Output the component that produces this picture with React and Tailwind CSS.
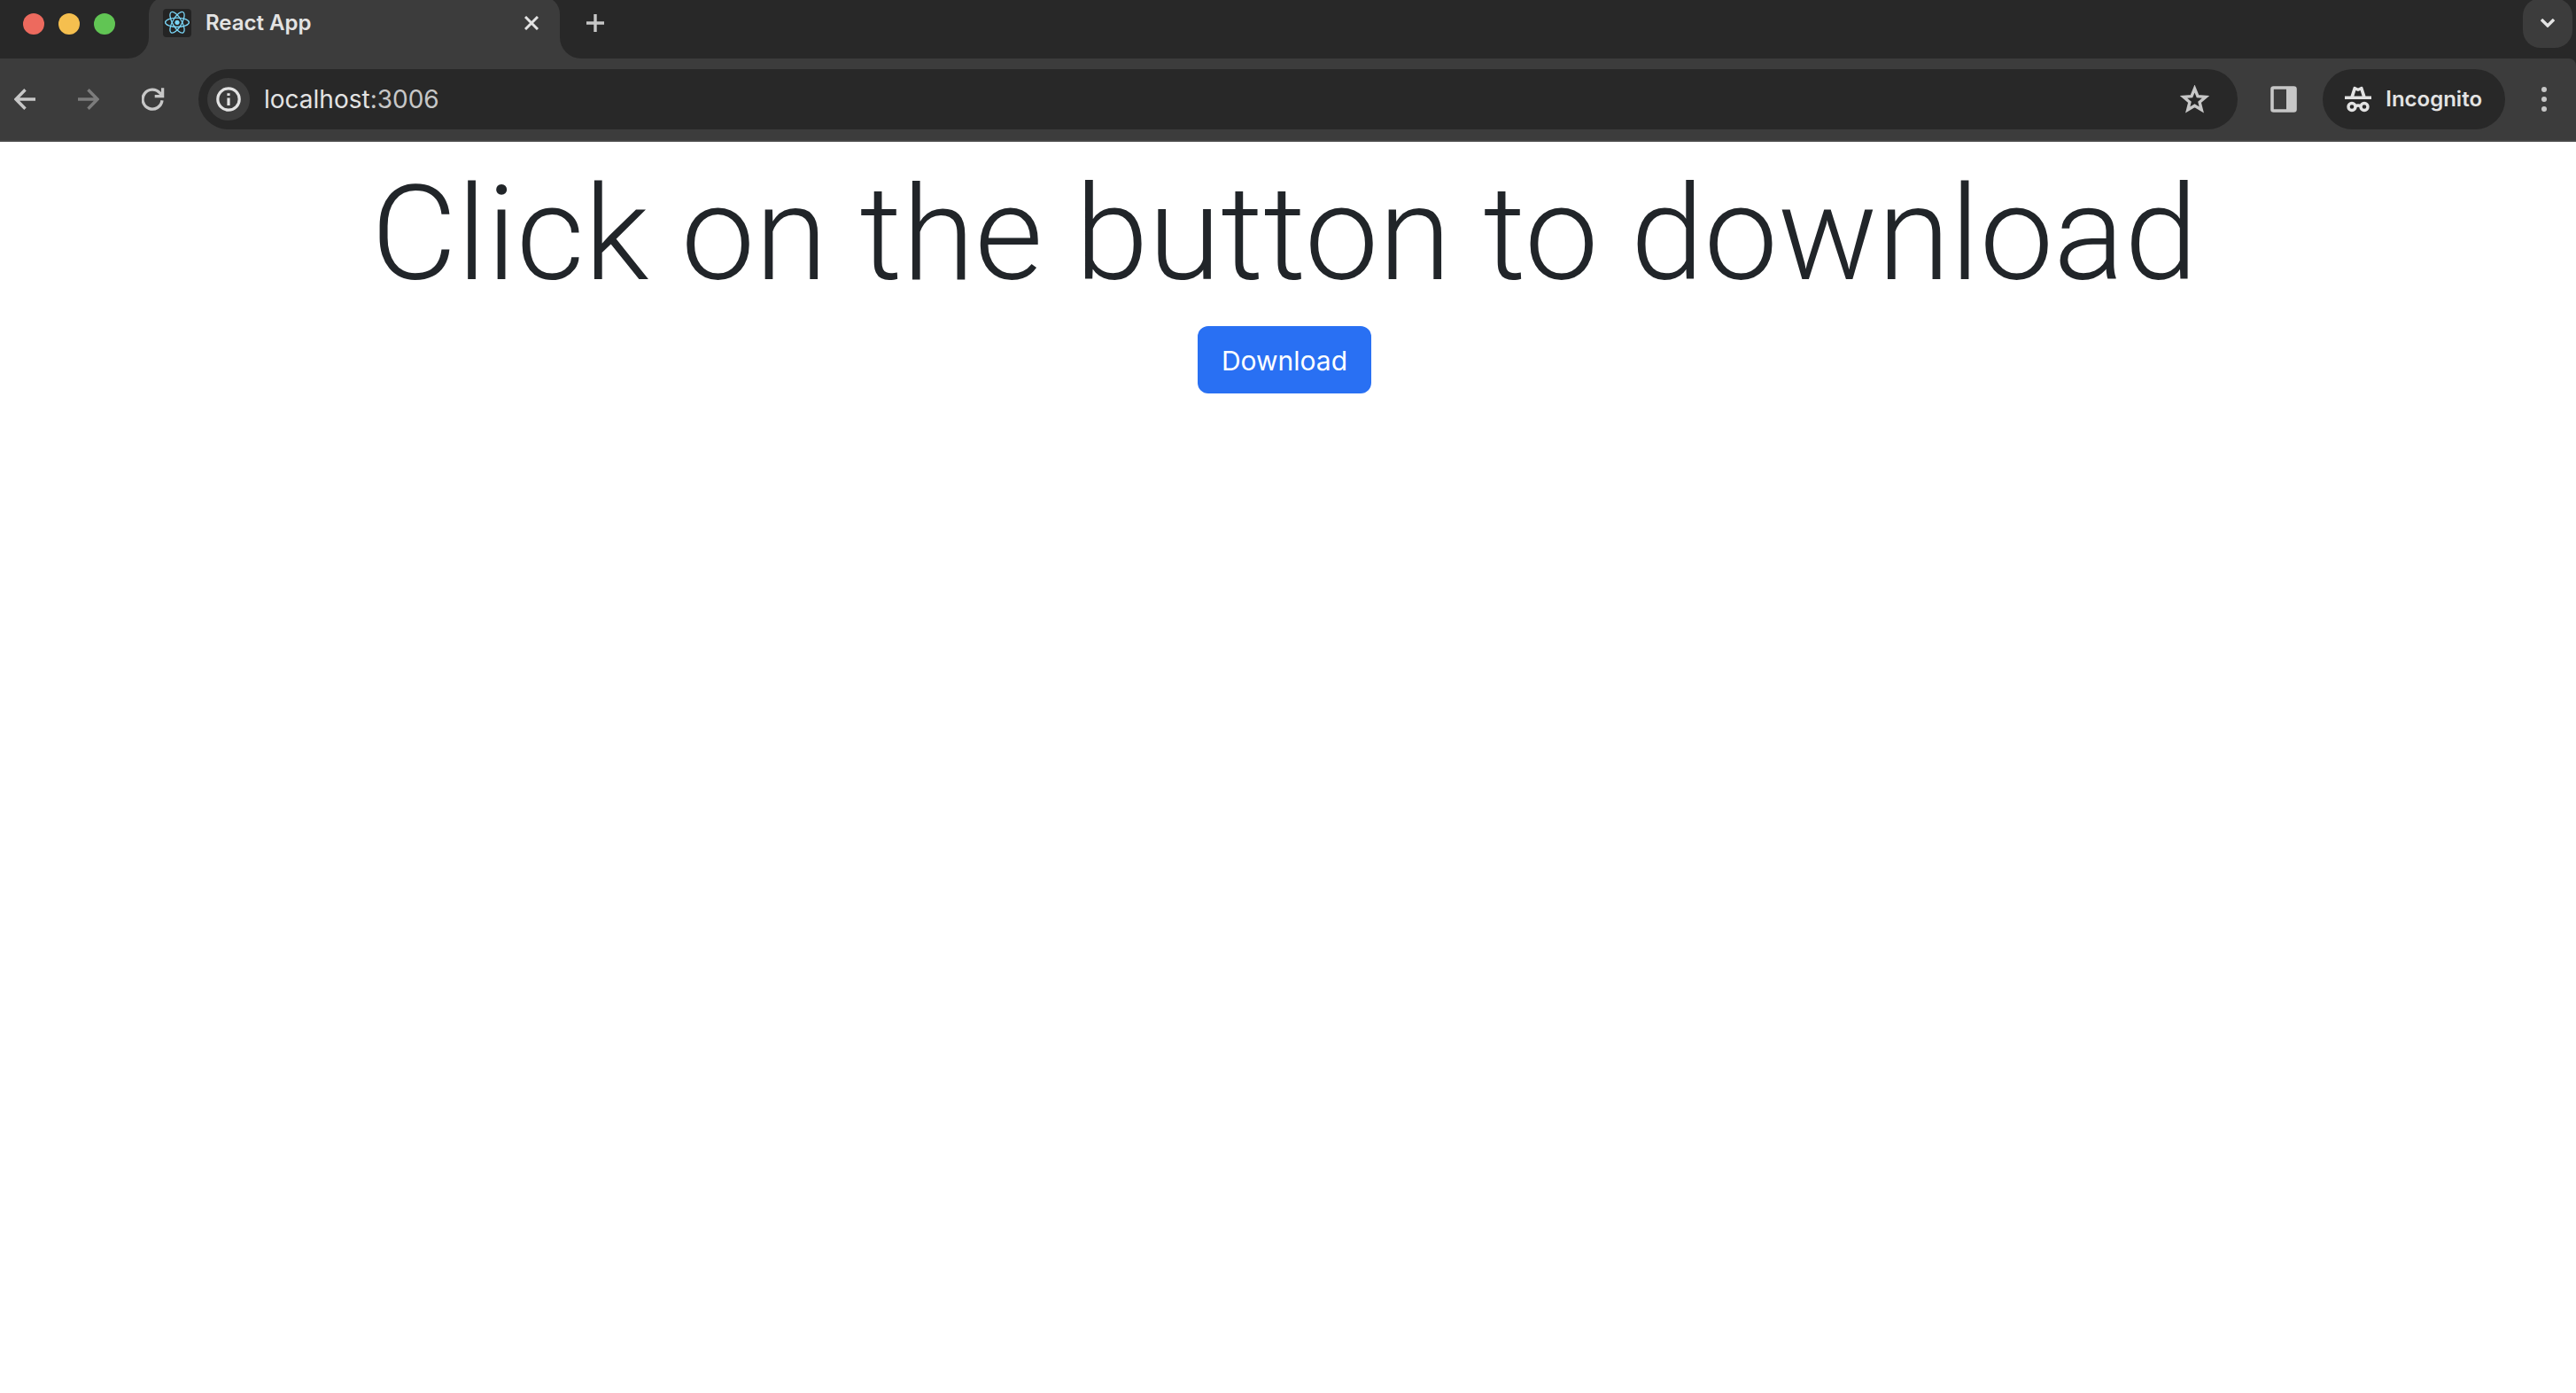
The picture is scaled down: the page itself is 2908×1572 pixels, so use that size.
const ICON = "block shrink-0";

function ReactLogo() {
  return (
    <svg viewBox="0 0 32 32" className="block size-8 shrink-0" fill="none" aria-hidden="true">
      <rect width="32" height="32" rx="4" fill="#242424" />
      <circle cx="16" cy="15.3" r="2.6" fill="#7ad6f7" />
      <g stroke="#7ad6f7" strokeWidth="1.3">
        <ellipse cx="16" cy="15.3" rx="13.4" ry="5.2" />
        <ellipse cx="16" cy="15.3" rx="13.4" ry="5.2" transform="rotate(60 16 15.3)" />
        <ellipse cx="16" cy="15.3" rx="13.4" ry="5.2" transform="rotate(120 16 15.3)" />
      </g>
    </svg>
  );
}

function ArrowIcon({ flipped }) {
  return (
    <svg viewBox="0 0 24 24" className={`${ICON} size-6`} fill="none" stroke="currentColor" strokeWidth="3.4" aria-hidden="true">
      <path d={flipped ? "M0 12H22M11.5 1.2L22 12L11.5 22.8" : "M24 12H2M12.5 1.2L2 12L12.5 22.8"} />
    </svg>
  );
}

function ReloadIcon() {
  return (
    <svg viewBox="1 0 26 26" className={`${ICON} size-[26px]`} fill="none" stroke="currentColor" strokeWidth="3.3" aria-hidden="true">
      <path d="M24 14.3A11 11 0 1 1 21.5 6L24.3 9M15.7 9.7H24.6V.3" />
    </svg>
  );
}

function InfoIcon() {
  return (
    <svg viewBox="0 0 28 28" className={`${ICON} size-7`} fill="none" stroke="currentColor" aria-hidden="true">
      <circle cx="14" cy="14" r="12.2" strokeWidth="3.2" />
      <path d="M14 12.5V21M14 7.2V10" strokeWidth="3.2" />
    </svg>
  );
}

function StarIcon() {
  return (
    <svg viewBox="0 0 33 33" className={`${ICON} size-[33px]`} fill="none" stroke="currentColor" strokeWidth="3.4" aria-hidden="true">
      <path d="M16.5 4L20 12.7L29 13.4L22.1 19.3L24.3 28L16.5 23.3L8.7 28L10.9 19.3L4 13.4L13 12.7Z" />
    </svg>
  );
}

function SidePanelIcon() {
  return (
    <svg viewBox="0 0 30 30" className={`${ICON} size-[30px]`} fill="none" aria-hidden="true">
      <rect x="2" y="2" width="26" height="26" rx="1.5" stroke="currentColor" strokeWidth="3.6" />
      <path d="M18 2H28V28H18Z" fill="currentColor" />
    </svg>
  );
}

function IncognitoIcon() {
  return (
    <svg viewBox="0 0 30 30" className={`${ICON} size-[30px]`} fill="none" aria-hidden="true">
      <path d="M0 11.5H6.5L9.6 1.8Q10 .4 11.3 .8L15 2.4L18.7 .8Q20 .4 20.4 1.8L23.5 11.5H30V15H0Z" fill="currentColor" />
      <path d="M10.4 11.5L12.4 4.9L15 6.1L17.6 4.9L19.6 11.5Z" fill="#282828" />
      <g stroke="currentColor" strokeWidth="3.4">
        <circle cx="8" cy="23.5" r="4" />
        <circle cx="22" cy="23.5" r="4" />
        <path d="M12 23Q15 21 18 23" />
      </g>
    </svg>
  );
}

function TabStrip() {
  return (
    <div className="flex h-[66px] items-end overflow-hidden bg-[#282828]">
      <div className="flex h-[66px] w-42 shrink-0 bg-[#3c3c3c]">
        <div className="flex flex-1 items-start gap-4 rounded-br-[24px] bg-[#282828] pt-[15px] pl-[26px]">
          <button type="button" aria-label="Close window" className="size-6 rounded-full bg-[#ed6a5e]" />
          <button type="button" aria-label="Minimize window" className="size-6 rounded-full bg-[#f5bf4f]" />
          <button type="button" aria-label="Zoom window" className="size-6 rounded-full bg-[#61c554]" />
        </div>
      </div>
      <div className="flex h-[70px] w-116 shrink-0 items-start rounded-t-[20px] bg-[#3c3c3c] pt-[14px] pr-4 pl-4">
        <ReactLogo />
        <span className="ml-4 flex-1 text-[24px] leading-8 font-semibold text-[#e3e3e3]">React App</span>
        <button type="button" aria-label="Close tab" className="flex size-8 items-center justify-center text-[#e3e3e3]">
          <svg viewBox="0 0 16 16" className="size-4" stroke="currentColor" strokeWidth="3" aria-hidden="true">
            <path d="M1 1L15 15M15 1L1 15" />
          </svg>
        </button>
      </div>
      <div className="flex h-[66px] min-w-0 flex-1 bg-[#3c3c3c]">
        <div className="flex flex-1 items-end justify-between rounded-bl-[24px] bg-[#282828] pr-1 pb-3 pl-6">
          <button type="button" aria-label="New tab" className="mt-[10px] flex size-8 items-center justify-center self-start text-[#c7c7c7]">
            <svg viewBox="0 0 20 20" className="size-5" stroke="currentColor" strokeWidth="3.4" aria-hidden="true">
              <path d="M10 0V20M0 10H20" />
            </svg>
          </button>
          <button type="button" aria-label="Search tabs" className="flex size-14 shrink-0 items-center justify-center rounded-[20px] bg-[#3c3c3c] text-[#e3e3e3]">
            <svg viewBox="0 0 16 10" className="h-[10px] w-4" fill="none" stroke="currentColor" strokeWidth="3.4" aria-hidden="true">
              <path d="M1 1L8 8L15 1" />
            </svg>
          </button>
        </div>
      </div>
    </div>
  );
}

function Toolbar() {
  return (
    <div className="bg-[#282828]">
      <div className="flex h-[94px] items-center rounded-tr-lg border-b-2 border-[#474747] bg-[#3c3c3c] text-[#c7c7c7]">
        <div className="flex shrink-0 items-center gap-12 pl-4">
          <button type="button" aria-label="Back"><ArrowIcon /></button>
          <button type="button" aria-label="Forward" disabled className="text-[#7c7c7c]"><ArrowIcon flipped /></button>
          <button type="button" aria-label="Reload"><ReloadIcon /></button>
        </div>
        <div className="ml-[38px] flex h-17 min-w-0 flex-1 items-center rounded-full bg-[#282828] pr-8 pl-[10px]">
          <button type="button" aria-label="View site information" className="flex size-12 shrink-0 items-center justify-center rounded-full bg-[#3c3c3c] text-[#e3e3e3]">
            <InfoIcon />
          </button>
          <a href="#top" className="ml-4 flex-1 text-[28px] leading-10 text-[#c7c7c7]">
            <span className="text-[#e3e3e3]">localhost</span>:3006
          </a>
          <button type="button" aria-label="Bookmark this tab"><StarIcon /></button>
        </div>
        <button type="button" aria-label="Side panel" className="mr-[29px] ml-[37px]"><SidePanelIcon /></button>
        <button type="button" className="flex h-17 shrink-0 items-center gap-4 rounded-full bg-[#282828] pr-[26px] pl-[25px] text-[24px] font-semibold text-[#e3e3e3]">
          <IncognitoIcon />
          Incognito
        </button>
        <button type="button" aria-label="Menu" className="mr-8 ml-10">
          <svg viewBox="0 0 8 28" className="h-7 w-2" fill="currentColor" aria-hidden="true">
            <circle cx="4" cy="3" r="3" />
            <circle cx="4" cy="14" r="3" />
            <circle cx="4" cy="25" r="3" />
          </svg>
        </button>
      </div>
    </div>
  );
}

export default function App() {
  return (
    <div id="top" className="min-h-screen bg-white font-['Inter',sans-serif]">
      <header>
        <TabStrip />
        <Toolbar />
      </header>
      <main className="flex flex-col items-center pr-2">
        <h1 className="mb-4 pt-4 text-center font-['Roboto',sans-serif] text-[149px] leading-[176px] font-light text-[#212529]">
          Click on the button to download
        </h1>
        <button type="button" className="rounded-xl bg-[#2970f3] px-[27px] pt-[15px] pb-[13px] text-[30px] leading-12 text-white">
          Download
        </button>
      </main>
    </div>
  );
}
